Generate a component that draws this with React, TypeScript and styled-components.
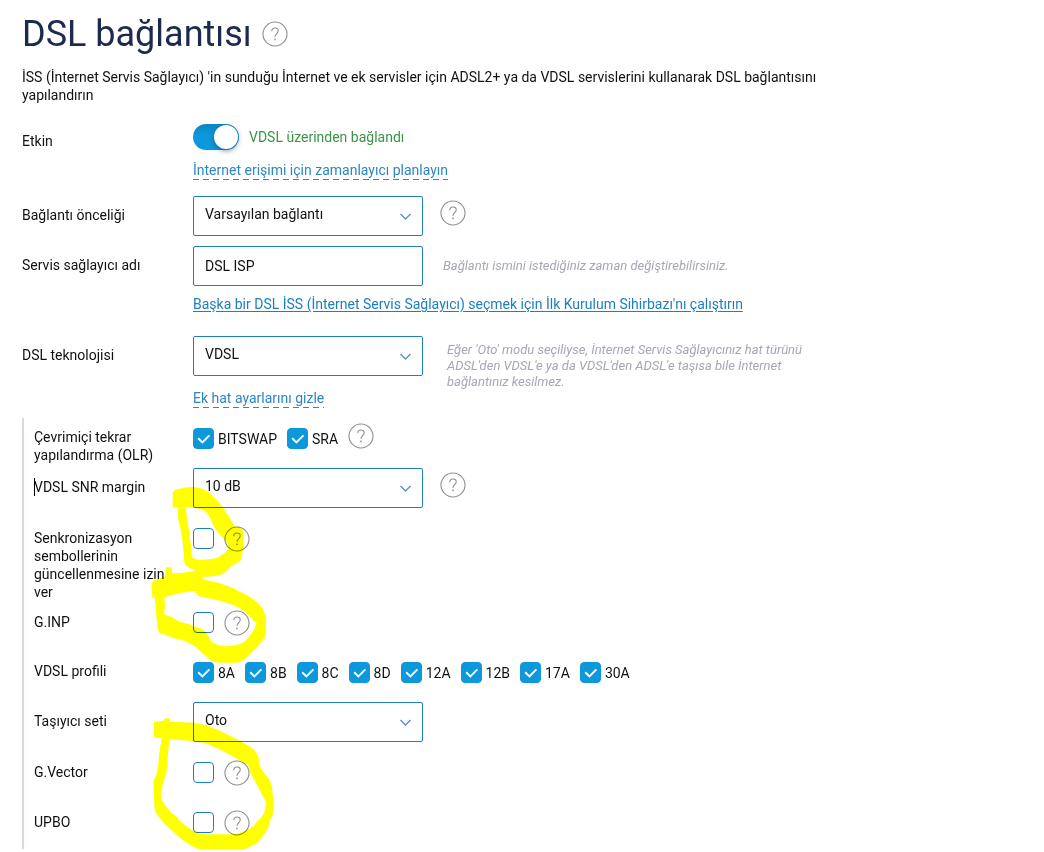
import React, { useId, useState } from 'react';
import styled, { createGlobalStyle } from 'styled-components';

const GlobalStyle = createGlobalStyle`
  * { box-sizing: border-box; }
  body {
    margin: 0;
    background: #fff;
    color: #111;
    font: 14px/18px Roboto, "Liberation Sans", sans-serif;
  }
  input, select, button { font: inherit; color: inherit; margin: 0; }
`;

const Page = styled.main`
  position: relative;
  padding: 12px 22px 0;
`;

const Header = styled.header`
  display: flex;
  align-items: center;
  gap: 10px;
  height: 44px;
`;

const Title = styled.h1`
  margin: 0;
  font-size: 36px;
  line-height: 44px;
  font-weight: 400;
  color: #1b2a4e;
`;

const Intro = styled.p`
  margin: 12px 0 20px;
  max-width: 820px;
`;

const HelpButton = styled.button`
  flex: none;
  display: block;
  width: 26px;
  height: 26px;
  padding: 0;
  border: 0;
  background: none;
  color: #8f8f8f;

  svg { display: block; }
`;

const Row = styled.div<{ $height?: number; $check?: boolean }>`
  display: grid;
  grid-template-columns: 171px minmax(0, 1fr);
  min-height: ${(p) => p.$height ?? 50}px;
  padding: ${(p) => (p.$check ? '10px 0 1px' : '0')};
`;

const RowLabel = styled.div<{ $top?: number }>`
  padding-top: ${(p) => p.$top ?? 10}px;
  max-width: 140px;
`;

const Group = styled.section`
  border-left: 2px solid #d8d9e3;
  padding-left: 10px;

  ${Row} { grid-template-columns: 159px minmax(0, 1fr); }
  ${Row}:last-child { min-height: 47px; }
`;

const Controls = styled.div`
  display: flex;
  flex-direction: column;
  align-items: flex-start;
`;

const Line = styled.div<{ $gap?: number }>`
  display: flex;
  align-items: flex-start;
  gap: ${(p) => p.$gap ?? 10}px;
`;

const FieldHelp = styled.div`
  padding-top: 4px;
`;

const CheckLine = styled.div<{ $raised?: boolean }>`
  display: flex;
  align-items: center;
  gap: 10px;
  height: 21px;

  ${HelpButton} { margin-bottom: ${(p) => (p.$raised ? 6 : 0)}px; }
`;

const Switch = styled.input`
  appearance: none;
  width: 46px;
  height: 26px;
  border-radius: 13px;
  background: #b9bcc8;
  position: relative;

  &:checked { background: linear-gradient(#0b86c2, #0d98db 45%); }

  &::before {
    content: '';
    position: absolute;
    top: 1px;
    left: 1px;
    width: 24px;
    height: 24px;
    border-radius: 50%;
    background: #fff;
    box-shadow: 0 2px 5px rgba(0, 40, 90, 0.45);
  }

  &:checked::before { left: 21px; }
`;

const Status = styled.span`
  color: #3a9447;
  line-height: 26px;
`;

const DashedLink = styled.a<{ $top: number }>`
  margin-top: ${(p) => p.$top}px;
  padding-bottom: 1px;
  color: #2d87c0;
  line-height: 17px;
  text-decoration: none;
  background: repeating-linear-gradient(90deg, #2d87c0 0 6px, transparent 6px 10px) left bottom / 100% 1px no-repeat;
`;

const WizardLink = styled.a`
  margin-top: 9px;
  color: #1c80c0;
  text-decoration: underline;
  text-underline-offset: 2px;
`;

const SelectBox = styled.div`
  display: grid;
  align-self: start;
  width: 230px;
  flex: none;

  > * { grid-area: 1 / 1; }

  svg {
    justify-self: end;
    align-self: center;
    margin-right: 11px;
    pointer-events: none;
  }
`;

const Select = styled.select`
  appearance: none;
  height: 40px;
  padding: 0 30px 4px 11px;
  border: 1px solid #1d80bb;
  border-radius: 2px;
  background: none;
`;

const TextInput = styled.input`
  flex: none;
  width: 230px;
  height: 40px;
  padding: 0 11px;
  border: 1px solid #1d80bb;
  border-radius: 2px;
  background: none;
`;

const Hint = styled.p<{ $top: number }>`
  margin: 0;
  padding-top: ${(p) => p.$top}px;
  max-width: 380px;
  color: #a5a8b4;
  font-size: 13px;
  line-height: 16px;
  font-style: italic;
`;

const CheckLabel = styled.label`
  display: flex;
  align-items: center;
  gap: 4px;
`;

const CheckBoxFrame = styled.span`
  display: grid;
  width: 21px;
  height: 21px;

  > * { grid-area: 1 / 1; }
  svg { pointer-events: none; }
`;

const CheckInput = styled.input`
  appearance: none;
  width: 21px;
  height: 21px;
  border: 1px solid #1d80bb;
  border-radius: 4px;

  &:checked { background: #0d98db; border-color: #0d98db; }
`;

const Caret = styled.span`
  position: absolute;
  width: 1px;
  height: 18px;
  background: #000;
`;

const Marker = styled.svg`
  position: absolute;
  top: 0;
  left: 0;
  mix-blend-mode: multiply;
  pointer-events: none;
`;

function Help({ topic }: { topic: string }) {
  return (
    <HelpButton type="button" aria-label={topic}>
      <svg width="26" height="26" viewBox="0 0 26 26" fill="none" stroke="currentColor" strokeWidth="1.1">
        <circle cx="13" cy="13" r="12" />
        <path d="M9.8 10.2c0-2 1.3-3.2 3.2-3.2s3.2 1.1 3.2 2.9c0 2.6-3.2 2.9-3.2 5.8" />
        <path d="M13 17.6v1.6" strokeWidth="1.4" />
      </svg>
    </HelpButton>
  );
}

function Dropdown({ id, options }: { id: string; options: string[] }) {
  return (
    <SelectBox>
      <Select id={id}>
        {options.map((o) => <option key={o}>{o}</option>)}
      </Select>
      <svg width="13" height="9" viewBox="0 0 13 9" fill="none" stroke="#6292c4" strokeWidth="1.5">
        <path d="M1.5 2l5 5 5-5" />
      </svg>
    </SelectBox>
  );
}

function Check({ id, text, initial = false }: { id?: string; text?: string; initial?: boolean }) {
  const [on, setOn] = useState(initial);
  const own = useId();
  const box = (
    <CheckBoxFrame>
      <CheckInput id={id ?? own} type="checkbox" checked={on} onChange={() => setOn(!on)} />
      {on && (
        <svg width="21" height="21" viewBox="0 0 21 21" fill="none" stroke="#fff" strokeWidth="2">
          <path d="M5.2 10.2l4.2 4.2 7-7" />
        </svg>
      )}
    </CheckBoxFrame>
  );
  return text ? <CheckLabel htmlFor={id ?? own}>{box}{text}</CheckLabel> : box;
}

const profiles = ['8A', '8B', '8C', '8D', '12A', '12B', '17A', '30A'];

export default function App() {
  const [enabled, setEnabled] = useState(true);
  return (
    <Page>
      <GlobalStyle />
      <Header>
        <Title>DSL bağlantısı</Title>
        <Help topic="DSL bağlantısı" />
      </Header>
      <Intro>
        İSS (İnternet Servis Sağlayıcı) 'in sunduğu İnternet ve ek servisler için ADSL2+ ya da VDSL servislerini kullanarak DSL bağlantısını yapılandırın
      </Intro>

      <Row $height={72}>
        <RowLabel as="label" htmlFor="enabled" $top={8}>Etkin</RowLabel>
        <Controls>
          <Line>
            <Switch id="enabled" type="checkbox" role="switch" checked={enabled} onChange={() => setEnabled(!enabled)} />
            <Status>VDSL üzerinden bağlandı</Status>
          </Line>
          <DashedLink href="#timer" $top={12}>İnternet erişimi için zamanlayıcı planlayın</DashedLink>
        </Controls>
      </Row>

      <Row>
        <RowLabel as="label" htmlFor="priority">Bağlantı önceliği</RowLabel>
        <Line $gap={17}>
          <Dropdown id="priority" options={['Varsayılan bağlantı']} />
          <FieldHelp><Help topic="Bağlantı önceliği" /></FieldHelp>
        </Line>
      </Row>

      <Row $height={90}>
        <RowLabel as="label" htmlFor="provider">Servis sağlayıcı adı</RowLabel>
        <Controls>
          <Line $gap={20}>
            <TextInput id="provider" type="text" defaultValue="DSL ISP" />
            <Hint $top={12}>Bağlantı ismini istediğiniz zaman değiştirebilirsiniz.</Hint>
          </Line>
          <WizardLink href="#wizard">Başka bir DSL İSS (İnternet Servis Sağlayıcı) seçmek için İlk Kurulum Sihirbazı'nı çalıştırın</WizardLink>
        </Controls>
      </Row>

      <Row $height={82}>
        <RowLabel as="label" htmlFor="technology">DSL teknolojisi</RowLabel>
        <Controls>
          <Line $gap={24}>
            <Dropdown id="technology" options={['VDSL', 'Oto']} />
            <Hint $top={6}>
              Eğer 'Oto' modu seçiliyse, İnternet Servis Sağlayıcınız hat türünü ADSL'den VDSL'e ya da VDSL'den ADSL'e taşısa bile İnternet bağlantınız kesilmez.
            </Hint>
          </Line>
          <DashedLink href="#line" $top={0}>Ek hat ayarlarını gizle</DashedLink>
        </Controls>
      </Row>

      <Group>
        <Row $check>
          <RowLabel $top={0}>Çevrimiçi tekrar yapılandırma (OLR)</RowLabel>
          <CheckLine $raised>
            <Check text="BITSWAP" initial />
            <Check text="SRA" initial />
            <Help topic="OLR" />
          </CheckLine>
        </Row>
        <Row>
          <RowLabel as="label" htmlFor="snr"><Caret />VDSL SNR margin</RowLabel>
          <Line $gap={17}>
            <Dropdown id="snr" options={['10 dB']} />
            <FieldHelp><Help topic="VDSL SNR margin" /></FieldHelp>
          </Line>
        </Row>
        <Row $check>
          <RowLabel as="label" htmlFor="sync" $top={1}>Senkronizasyon sembollerinin güncellenmesine izin ver</RowLabel>
          <CheckLine><Check id="sync" /><Help topic="Senkronizasyon" /></CheckLine>
        </Row>
        <Row $check>
          <RowLabel as="label" htmlFor="ginp" $top={1}>G.INP</RowLabel>
          <CheckLine><Check id="ginp" /><Help topic="G.INP" /></CheckLine>
        </Row>
        <Row $check>
          <RowLabel $top={0}>VDSL profili</RowLabel>
          <CheckLine>
            {profiles.map((p) => <Check key={p} text={p} initial />)}
          </CheckLine>
        </Row>
        <Row>
          <RowLabel as="label" htmlFor="carrier">Taşıyıcı seti</RowLabel>
          <Dropdown id="carrier" options={['Oto']} />
        </Row>
        <Row $check>
          <RowLabel as="label" htmlFor="gvector" $top={1}>G.Vector</RowLabel>
          <CheckLine><Check id="gvector" /><Help topic="G.Vector" /></CheckLine>
        </Row>
        <Row $check>
          <RowLabel as="label" htmlFor="upbo" $top={1}>UPBO</RowLabel>
          <CheckLine><Check id="upbo" /><Help topic="UPBO" /></CheckLine>
        </Row>
      </Group>

      <Marker width="290" height="852" viewBox="0 0 870 2556" fill="#ff0" fillRule="evenodd" strokeLinejoin="round" aria-hidden="true">
        <g transform="translate(420 1440)">
          <path d="M98 82L98 40Q102 28 115 28Q150 14 190 27Q210 38 225 55Q245 75 260 100L285 140L300 140Q310 148 310 160L310 205L303 240Q293 251 275 255Q258 277 245 283Q226 291 188 290L160 268Q140 264 133 248Q131 215 128 190Q124 150 115 120L113 82Z M137 82L158 82L190 90Q207 103 212 118Q220 140 232 155L262 190L266 205Q255 221 245 225Q232 236 215 237L175 240Q156 236 155 228Q156 200 150 180Q148 150 143 130Z" />
          <path d="M37 353L35 308L45 300L75 290L78 262L95 262L97 280L130 278L188 270L188 298L240 310Q275 321 300 335Q328 346 345 362Q367 378 372 395Q380 410 378 430L376 472L360 490Q350 507 330 520Q315 545 290 548L240 548Q215 546 205 535L180 513Q170 498 150 492Q128 478 100 475L68 461Q52 460 53 440Q48 405 47 380L44 353Z M73 352L115 340L165 333L172 347L230 360Q265 368 290 380Q312 390 325 405L350 430Q343 452 330 465Q318 485 300 492Q275 500 250 498Q225 494 215 485L200 460Q187 444 165 440Q145 430 120 425Q95 410 72 402L75 380Z" />
        </g>
        <g transform="translate(420 2115)">
          <path d="M42 98L42 50L70 48L75 40L88 40L90 50L160 53Q190 56 210 65Q240 75 270 92Q310 112 335 128Q350 140 355 155L362 190L385 220Q399 240 397 265Q403 290 400 310Q402 330 388 350Q386 374 370 390Q355 416 330 425Q302 438 270 440L220 440Q175 436 150 420Q124 405 100 380Q75 362 60 340Q42 323 43 300L40 230Q52 207 55 180Q56 152 60 130L65 100Z M88 103L150 107Q185 110 210 120Q240 132 265 148Q295 164 325 180Q329 204 340 220L375 285Q381 300 375 315Q371 336 350 350Q340 368 320 375Q295 388 270 388L215 388Q178 389 160 378Q130 360 110 335Q84 316 75 300Q62 284 63 265L70 230Q82 200 82 170Z" />
        </g>
      </Marker>
    </Page>
  );
}
